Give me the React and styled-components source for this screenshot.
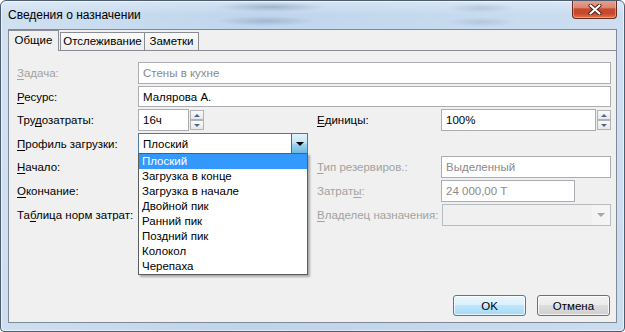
import React from "react";
import styled, { createGlobalStyle } from "styled-components";

const GlobalStyle = createGlobalStyle`
  html, body {
    margin: 0;
    padding: 0;
    background: #ffffff;
  }
  body {
    font-family: "Liberation Sans", Arial, sans-serif;
    -webkit-font-smoothing: antialiased;
  }
`;

const Window = styled.div`
  width: 625px;
  height: 332px;
  box-sizing: border-box;
  border: 1px solid #4d5c6e;
  border-radius: 6px 6px 4px 4px;
  padding: 0 7px 8px 7px;
  display: flex;
  flex-direction: column;
  overflow: hidden;
  background:
    radial-gradient(ellipse 55px 5px at 270px 6px, rgba(70, 95, 130, 0.32), transparent),
    radial-gradient(ellipse 50px 5px at 265px 20px, rgba(70, 95, 130, 0.26), transparent),
    radial-gradient(ellipse 35px 5px at 480px 7px, rgba(70, 95, 130, 0.18), transparent),
    radial-gradient(ellipse 35px 5px at 480px 21px, rgba(70, 95, 130, 0.16), transparent),
    linear-gradient(90deg, rgba(255, 255, 255, 0.25), rgba(255, 255, 255, 0) 40%, rgba(255, 255, 255, 0.2)),
    linear-gradient(180deg, #d3e3f4 0px, #bfd5ec 14px, #c3d8ee 40px, #bed4eb 100%);
  box-shadow: inset 0 0 0 1px rgba(255, 255, 255, 0.55);
`;

const TitleBar = styled.div`
  height: 28px;
  display: flex;
  align-items: flex-start;
  justify-content: space-between;
  flex-shrink: 0;
`;

const Title = styled.span`
  padding-top: 6px;
  font-size: 12px;
  line-height: 16px;
  color: #000;
`;

const CloseButton = styled.div`
  width: 45px;
  height: 19px;
  margin-top: -1px;
  box-sizing: border-box;
  border: 1px solid #6b2a1f;
  border-top: none;
  border-radius: 0 0 4px 4px;
  display: flex;
  align-items: center;
  justify-content: center;
  background: linear-gradient(180deg, #e8a493 0%, #d98672 42%, #c44a32 50%, #c9472b 75%, #de7a4a 100%);
  box-shadow: inset 0 0 0 1px rgba(255, 210, 190, 0.45);
`;

const Client = styled.div`
  flex: 1;
  display: flex;
  flex-direction: column;
  border: 1px solid #7f8a97;
  background: #f0f0f0;
`;

const TabStrip = styled.div`
  height: 20px;
  display: flex;
  align-items: flex-end;
  position: relative;
  z-index: 1;
`;

const Tab = styled.div`
  box-sizing: border-box;
  height: ${(p) => (p.$active ? "21px" : "18px")};
  margin-bottom: ${(p) => (p.$active ? "-1px" : "0")};
  margin-left: ${(p) => p.$offset}px;
  width: ${(p) => p.$width}px;
  border: 1px solid #898c95;
  border-bottom: none;
  background: ${(p) =>
    p.$active ? "#f0f0f0" : "linear-gradient(180deg, #fbfbfb 0%, #eeeeee 100%)"};
  font-size: 11.5px;
  line-height: ${(p) => (p.$active ? "19px" : "17px")};
  text-align: center;
  color: #000;
`;

const Panel = styled.div`
  flex: 1;
  display: flex;
  flex-direction: column;
  border-top: 1px solid #898c95;
  padding: 0 6px 6px 0;
`;

const Form = styled.div`
  display: grid;
  grid-template-columns: 121px 179px 124px 170px;
  grid-template-rows: 22px 21px 22px 21px 22px 22px 22px;
  row-gap: 2px;
  padding: 11px 0 0 8px;
`;

const Label = styled.div`
  align-self: center;
  font-size: 11.5px;
  color: ${(p) => (p.$disabled ? "#a2a2a2" : "#000")};
  white-space: nowrap;
`;

const K = styled.span`
  text-decoration: underline;
  text-underline-offset: 2px;
`;

const Field = styled.div`
  box-sizing: border-box;
  height: 100%;
  width: ${(p) => (p.$width ? `${p.$width}px` : "100%")};
  grid-column: ${(p) => p.$span || "auto"};
  border: 1px solid #abadb3;
  background: #fff;
  padding-left: 4px;
  display: flex;
  align-items: center;
  font-size: 11.5px;
  color: ${(p) => (p.$disabled ? "#8a8a8a" : "#000")};
  white-space: nowrap;
`;

const Cell = styled.div`
  display: flex;
  align-items: center;
  gap: 1px;
  position: relative;
`;

const Spinner = styled.div`
  display: flex;
  flex-direction: column;
  width: 14px;
`;

const SpinButton = styled.div`
  height: 10px;
  box-sizing: border-box;
  border: 1px solid #b3b3b3;
  background: linear-gradient(180deg, #fafafa, #e7e7e7);
  display: flex;
  align-items: center;
  justify-content: center;
  & + & {
    margin-top: 0;
  }
  &::after {
    content: "";
    width: 0;
    height: 0;
    border-left: 3px solid transparent;
    border-right: 3px solid transparent;
    ${(p) =>
      p.$up ? "border-bottom: 3px solid #4e6390;" : "border-top: 3px solid #4e6390;"}
  }
`;

const Combo = styled.div`
  position: relative;
  box-sizing: border-box;
  width: ${(p) => p.$width}px;
  height: 100%;
  margin-left: ${(p) => p.$offset || 0}px;
  display: flex;
  border: 1px solid ${(p) => (p.$open ? "#4b7aa3" : p.$disabled ? "#b8bcc0" : "#abadb3")};
  background: ${(p) => (p.$disabled ? "#f0f0f0" : "#fff")};
`;

const ComboText = styled.div`
  flex: 1;
  display: flex;
  align-items: center;
  padding-left: 4px;
  font-size: 11.5px;
  color: #000;
`;

const ComboButton = styled.div`
  width: ${(p) => (p.$disabled ? 18 : 15)}px;
  display: flex;
  align-items: center;
  justify-content: center;
  border-left: ${(p) => (p.$disabled ? "none" : "1px solid #3c6f99")};
  background: ${(p) =>
    p.$disabled
      ? "#f4f4f4"
      : "linear-gradient(180deg, #e3f3fc 0%, #c5e5f7 45%, #9dd3f0 55%, #6fb7de 100%)"};
  &::after {
    content: "";
    width: 0;
    height: 0;
    border-left: ${(p) => (p.$disabled ? 4 : 4)}px solid transparent;
    border-right: 4px solid transparent;
    border-top: 4px solid ${(p) => (p.$disabled ? "#a6a6a6" : "#000")};
  }
`;

const DropList = styled.div`
  position: absolute;
  top: 100%;
  left: -1px;
  width: 170px;
  box-sizing: border-box;
  border: 1px solid #5c5c5c;
  background: #fff;
  box-shadow: 2px 2px 2px rgba(0, 0, 0, 0.3);
  z-index: 5;
`;

const DropItem = styled.div`
  height: 15px;
  line-height: 15px;
  padding-left: 3px;
  font-size: 11.5px;
  color: ${(p) => (p.$selected ? "#fff" : "#000")};
  background: ${(p) => (p.$selected ? "#3399ff" : "transparent")};
  white-space: nowrap;
`;

const Footer = styled.div`
  margin-top: auto;
  display: flex;
  justify-content: flex-end;
  gap: 11px;
`;

const Button = styled.div`
  width: 73px;
  height: 21px;
  box-sizing: border-box;
  border-radius: 3px;
  display: flex;
  align-items: center;
  justify-content: center;
  font-size: 11.5px;
  color: #000;
  border: 1px solid ${(p) => (p.$primary ? "#3c7fb1" : "#707070")};
  background: ${(p) =>
    p.$primary
      ? "linear-gradient(180deg, #eaf6fd 0%, #d9f0fc 50%, #bee6fd 50%, #a7d9f5 100%)"
      : "linear-gradient(180deg, #f2f2f2 0%, #ebebeb 50%, #dddddd 50%, #cfcfcf 100%)"};
  box-shadow: inset 0 0 0 1px rgba(255, 255, 255, 0.75);
`;

const profiles = [
  "Плоский",
  "Загрузка в конце",
  "Загрузка в начале",
  "Двойной пик",
  "Ранний пик",
  "Поздний пик",
  "Колокол",
  "Черепаха",
];

const CloseGlyph = () => (
  <svg width="14" height="11" viewBox="0 0 14 11">
    <path d="M2.5 1.5 L11.5 9.5 M11.5 1.5 L2.5 9.5" stroke="#4a1a12" strokeWidth="4" strokeLinecap="round" />
    <path d="M2.5 1.5 L11.5 9.5 M11.5 1.5 L2.5 9.5" stroke="#ffffff" strokeWidth="2.2" strokeLinecap="round" />
  </svg>
);

const App = () => {
  return (
    <>
      <GlobalStyle />
      <Window>
        <TitleBar>
          <Title>Сведения о назначении</Title>
          <CloseButton>
            <CloseGlyph />
          </CloseButton>
        </TitleBar>
        <Client>
          <TabStrip>
            <Tab $active $offset={-1} $width={51}>Общие</Tab>
            <Tab $offset={1} $width={85}>Отслеживание</Tab>
            <Tab $offset={-1} $width={55}>Заметки</Tab>
          </TabStrip>
          <Panel>
            <Form>
              <Label $disabled><K>З</K>адача:</Label>
              <Field $span="2 / 5" $disabled>Стены в кухне</Field>

              <Label><K>Р</K>есурс:</Label>
              <Field $span="2 / 5">Малярова А.</Field>

              <Label>Тру<K>д</K>озатраты:</Label>
              <Cell>
                <Field $width={51}>16ч</Field>
                <Spinner>
                  <SpinButton $up />
                  <SpinButton />
                </Spinner>
              </Cell>
              <Label><K>Е</K>диницы:</Label>
              <Cell>
                <Field $width={155}>100%</Field>
                <Spinner>
                  <SpinButton $up />
                  <SpinButton />
                </Spinner>
              </Cell>

              <Label><K>П</K>рофиль загрузки:</Label>
              <Cell>
                <Combo $open $width={170}>
                  <ComboText>Плоский</ComboText>
                  <ComboButton />
                  <DropList>
                    {profiles.map((name, i) => (
                      <DropItem key={name} $selected={i === 0}>
                        {name}
                      </DropItem>
                    ))}
                  </DropList>
                </Combo>
              </Cell>
              <div />
              <div />

              <Label><K>Н</K>ачало:</Label>
              <div />
              <Label $disabled><K>Т</K>ип резервиров.:</Label>
              <Field $disabled>Выделенный</Field>

              <Label><K>О</K>кончание:</Label>
              <div />
              <Label $disabled>Затрат<K>ы</K>:</Label>
              <Field $width={134} $disabled>24 000,00 Т</Field>

              <Label>Та<K>б</K>лица норм затрат:</Label>
              <div />
              <Label $disabled><K>В</K>ладелец назначения:</Label>
              <Combo $disabled $width={169} $offset={1}>
                <ComboText />
                <ComboButton $disabled />
              </Combo>
            </Form>
            <Footer>
              <Button $primary>OK</Button>
              <Button>Отмена</Button>
            </Footer>
          </Panel>
        </Client>
      </Window>
    </>
  );
};

export default App;
